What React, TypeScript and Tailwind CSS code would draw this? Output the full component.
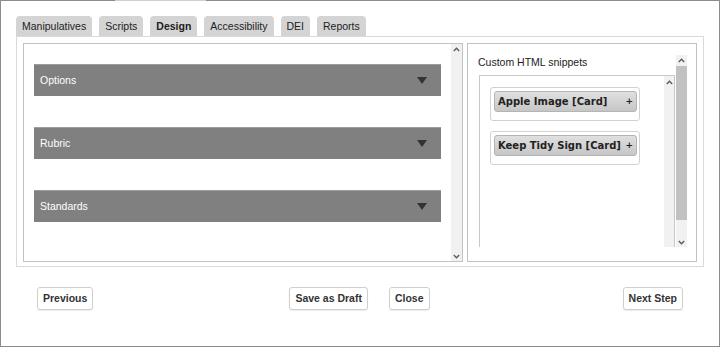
import React from 'react';

const tabs = ['Manipulatives', 'Scripts', 'Design', 'Accessibility', 'DEI', 'Reports'];
const sections = ['Options', 'Rubric', 'Standards'];
const snippets = ['Apple Image [Card]', 'Keep Tidy Sign [Card]'];

const Chevron = ({ down = false }: { down?: boolean }) => (
  <svg width="7" height="5" viewBox="0 0 7 5" className="block">
    <path
      d={down ? 'M0.8 1 L3.5 3.8 L6.2 1' : 'M0.8 4 L3.5 1.2 L6.2 4'}
      fill="none"
      stroke="#5a5a5a"
      strokeWidth="1.3"
    />
  </svg>
);

// fake scrollbar, drawn so it looks like the screenshot
const ScrollBar = ({ thumb = false }: { thumb?: boolean }) => (
  <div className="w-[11px] shrink-0 bg-[#f1f1f1] flex flex-col items-center">
    <div className="h-[10px] w-full flex items-center justify-center">
      <Chevron />
    </div>
    {thumb ? (
      <div className="w-full flex-1 flex flex-col pt-[1px] pb-[17px]">
        <div className="flex-1 bg-[#c1c1c1]" />
      </div>
    ) : (
      <div className="flex-1" />
    )}
    <div className="h-[10px] w-full flex items-center justify-center">
      <Chevron down />
    </div>
  </div>
);

const btn =
  'h-[23px] px-[5px] border border-[#cfcfcf] rounded-[3px] bg-white shadow-[0_1px_1px_rgba(0,0,0,0.08)] font-bold text-[10.5px] text-[#333]';

export default function App() {
  return (
    <div className="relative w-[720px] h-[347px] bg-white border border-[#8c8c8c] px-[15px] pt-[15px] flex flex-col font-['Liberation_Sans',Arial,sans-serif] text-[#222]">
      <div className="absolute top-[-1px] left-[114px] w-[91px] h-px bg-[#d0d0d0]" />

      {/* TABS */}
      <div className="flex gap-[7px] h-5">
        {tabs.map((t) => (
          <div
            key={t}
            className={`h-5 px-[6px] rounded-t-[4px] bg-[#d4d4d4] text-[10.5px] leading-5 ${t === 'Design' ? 'font-bold' : ''}`}
          >
            {t}
          </div>
        ))}
      </div>

      {/* TAB PANEL */}
      <div className="h-[231px] border border-[#dadada] p-[6px] pb-[4px] flex gap-[4px]">
        {/* LEFT PANE */}
        <div className="w-[440px] border border-[#c2c2c2] flex">
          <div className="flex-1 pt-[20px] px-[10px] flex flex-col gap-[31px]">
            {sections.map((s) => (
              <div
                key={s}
                className="h-[32px] bg-[#808080] border-t border-[#9c9c9c] pl-[6px] pr-[14px] flex items-center justify-between text-white text-[10.5px]"
              >
                <span>{s}</span>
                <svg width="10" height="7" viewBox="0 0 10 7">
                  <path d="M0 0 L10 0 L5 7 Z" fill="#333" />
                </svg>
              </div>
            ))}
          </div>
          <ScrollBar />
        </div>

        {/* RIGHT PANE */}
        <div className="flex-1 border border-[#c2c2c2] pt-[11px] pb-[14px] pl-[10px] pr-[9px] flex">
          <div className="flex-1 flex flex-col min-w-0 overflow-hidden">
            <div className="text-[10.5px] leading-[14px]">Custom HTML snippets</div>
            <div className="flex-1 mt-[6px] mx-[1px] border-t border-l border-r border-[#c8c8c8] flex">
              <div className="flex-1 pt-[11px] pl-[10px] flex flex-col gap-[10px]">
                {snippets.map((s) => (
                  <div key={s} className="w-[150px] border border-[#d2d2d2] rounded-[3px] pt-[3px] pl-[3px] pr-[2px] pb-[8px]">
                    <div className="h-[21px] rounded-[3px] border border-[#b4b4b4] bg-linear-to-b from-[#e0e0e0] to-[#c6c6c6] px-[3px] flex items-center justify-between font-['DejaVu_Sans',Verdana,sans-serif] font-bold text-[10px] text-[#222] whitespace-nowrap">
                      <span>{s}</span>
                      <span className="text-[9px]">+</span>
                    </div>
                  </div>
                ))}
              </div>
              <div className="w-[10px] shrink-0 bg-[#f1f1f1] flex flex-col items-center pt-[4px]">
                <Chevron />
              </div>
            </div>
          </div>
          <ScrollBar thumb />
        </div>
      </div>

      {/* FOOTER BUTTONS */}
      <div className="mt-[20px] mx-[21px] flex justify-between items-center">
        <button className={btn}>Previous</button>
        <div className="flex gap-[21px] ml-[3px]">
          <button className={btn}>Save as Draft</button>
          <button className={btn}>Close</button>
        </div>
        <button className={btn}>Next Step</button>
      </div>
    </div>
  );
}
